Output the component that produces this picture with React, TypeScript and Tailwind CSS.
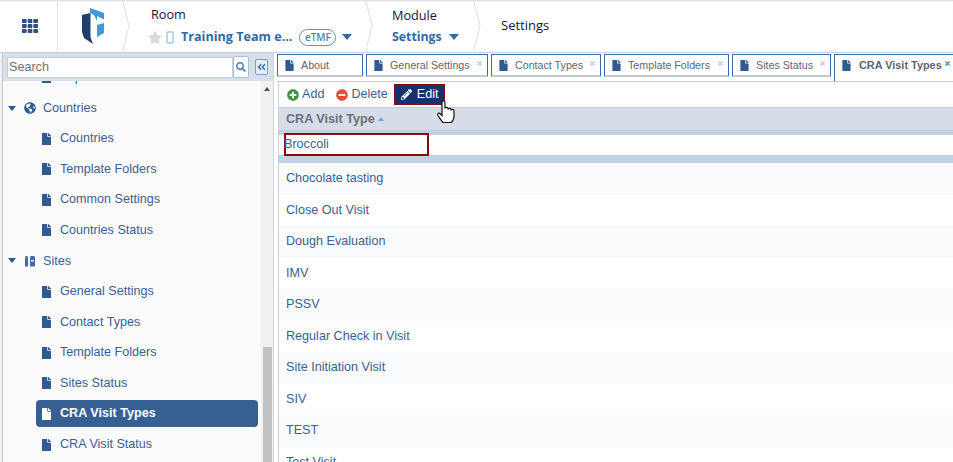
import React from "react";
import {
  FaAngleDoubleLeft,
  FaCaretDown,
  FaFile,
  FaGlobeAmericas,
  FaMinusCircle,
  FaPencilAlt,
  FaPlusCircle,
  FaSearch,
  FaStar,
  FaTh,
  FaTimes,
} from "react-icons/fa";

const tabs = [
  { label: "About", width: "w-[86px]", closable: false },
  { label: "General Settings", width: "w-[122px]", closable: true },
  { label: "Contact Types", width: "w-[110px]", closable: true },
  { label: "Template Folders", width: "w-[125px]", closable: true },
  { label: "Sites Status", width: "w-[99px]", closable: true },
];

const rows = [
  "Chocolate tasting",
  "Close Out Visit",
  "Dough Evaluation",
  "IMV",
  "PSSV",
  "Regular Check in Visit",
  "Site Initiation Visit",
  "SIV",
  "TEST",
  "Test Visit",
];

function Chevron() {
  return (
    <svg width="8" height="53" viewBox="0 0 8 53" className="shrink-0" fill="none">
      <path d="M0.500 0 L7 25 L0.500 53" stroke="#d3e2f1" strokeWidth="1" />
    </svg>
  );
}

function Caret() {
  return <span className="w-0 h-0 border-x-[5.500px] border-x-transparent border-t-[6px] border-t-[#2f6aa5]" />;
}

function TreeItem({ label, active }: { label: string; active?: boolean }) {
  return (
    <div className="h-[30.6px] flex items-center pl-[33px] pr-[3px]">
      <div
        className={`w-full h-[27px] flex items-center rounded-[4px] pl-[6px] text-[12.6px] ${
          active ? "bg-[#376092] text-white font-bold" : "text-[#3c5f92]"
        }`}
      >
        <FaFile className={`w-[9px] h-[12px] mr-[9px] ${active ? "text-white" : "text-[#2f5a92]"}`} />
        <span>{label}</span>
      </div>
    </div>
  );
}

function TreeGroup({ label, icon }: { label: string; icon: React.ReactNode }) {
  return (
    <div className="h-[30.6px] flex items-center pl-[5px] text-[12.6px] text-[#3c5f92]">
      <span className="w-0 h-0 border-x-[4.500px] border-x-transparent border-t-[5px] border-t-[#2f5a92]" />
      <span className="w-[12px] ml-[8px] mr-[7px] flex justify-center text-[#2f5a92]">{icon}</span>
      <span>{label}</span>
    </div>
  );
}

function SitesIcon() {
  return (
    <svg width="12" height="12" viewBox="0 0 12 12" fill="#3f6ea5">
      <path d="M1 3.500 L1.500 1 H3.500 L4 3.500 V11.500 H1 Z" />
      <path d="M6 3.500 L6.500 1 H10.500 L11 3.500 V11.500 H6 Z M7 5 V6.500 H10 V5 Z" fillRule="evenodd" />
    </svg>
  );
}

export default function App() {
  return (
    <div className="w-[953px] h-[462px] overflow-hidden bg-white font-['Liberation_Sans',Arial,sans-serif] flex flex-col">
      {/* Header */}
      <header className="h-[53px] shrink-0 flex border-b border-[#c9ced6] pl-[3px] bg-white font-['Open_Sans',sans-serif] shadow-[inset_0_2px_2px_-1px_#d8d8d8]">
        <div className="w-[55px] flex items-center justify-center border-r border-[#dfe7f0]">
          <FaTh className="w-[16px] h-[16px] text-[#2c4f85]" />
        </div>
        <div className="w-[64px] pl-[23px] pt-[8px]">
          <svg width="24" height="37" viewBox="0 0 24 37">
            <path d="M1 7 L9.500 5 V29 L12 36 L3 30 L1 24 Z" fill="#1f3f73" />
            <path d="M9 0 L23 5 V11.500 L16 8 V13 L13 7 L9 5 Z" fill="#3f97dd" />
            <path d="M16 17 L23 15 V25 L16 29 Z" fill="#3f97dd" />
          </svg>
        </div>
        <Chevron />
        <div className="w-[235px] pl-[21px] pt-[4px]">
          <div className="text-[12.700px] leading-[20px] text-[#14163c]">Room</div>
          <div className="flex items-center mt-[3px] h-[20px] -ml-[3px]">
            <FaStar className="w-[14px] h-[13px] text-[#d9d9d9]" />
            <svg width="8" height="13" viewBox="0 0 8 13" className="ml-[4px]" fill="none">
              <rect x="1" y="1" width="6" height="11" rx="1" stroke="#a3cbea" strokeWidth="1.500" />
            </svg>
            <span className="ml-[7px] text-[12.600px] font-bold text-[#2f6aa5]">Training Team e...</span>
            <span className="ml-[7px] w-[37px] h-[17px] flex items-center justify-center rounded-full border border-[#5f8fbe] text-[10px] font-semibold text-[#4f81b5]">
              eTMF
            </span>
            <span className="ml-[6px] flex">
              <Caret />
            </span>
          </div>
        </div>
        <Chevron />
        <div className="w-[100px] pl-[19px] pt-[4px]">
          <div className="text-[12.700px] leading-[22px] text-[#14163c]">Module</div>
          <div className="flex items-center h-[20px] mt-[1px]">
            <span className="text-[12.300px] font-bold text-[#2f6aa5]">Settings</span>
            <span className="ml-[7px] flex">
              <Caret />
            </span>
          </div>
        </div>
        <Chevron />
        <div className="pl-[20px] flex items-center text-[13px] text-[#14163c]">Settings</div>
      </header>

      <div className="flex flex-1 min-h-0">
        {/* Left edge of the page behind the panel */}
        <div className="w-[3px] shrink-0 bg-[#f1f1f1] border-r border-[#c4c8ce]" />

        {/* Sidebar */}
        <aside className="w-[270px] shrink-0 flex flex-col bg-[#fbfbfc]">
          <div className="h-[28px] shrink-0 flex items-center bg-[#d6dfea] pl-[4px]">
            <div className="w-[226px] h-[21px] bg-white border border-[#c5ced9] flex items-center pl-[1px] text-[12.600px] text-[#6f6f6f]">
              Search
            </div>
            <div className="w-[16px] h-[22px] bg-white border border-[#a9c0da] rounded-[2px] flex items-center justify-center">
              <FaSearch className="w-[10px] h-[10px] text-[#4a7fb8]" />
            </div>
            <div className="ml-[6px] w-[13px] h-[16px] bg-[#e5ecf5] border border-[#7d9fc9] rounded-[2px] flex items-center justify-center">
              <FaAngleDoubleLeft className="w-[9px] h-[10px] text-[#3f6fae]" />
            </div>
          </div>
          <div className="flex-1 min-h-0 flex">
            <div className="w-[258px] overflow-hidden">
              <div className="-mt-[18.900px]">
                <TreeItem label="Export" />
                <TreeGroup label="Countries" icon={<FaGlobeAmericas className="w-[12px] h-[12px]" />} />
                <TreeItem label="Countries" />
                <TreeItem label="Template Folders" />
                <TreeItem label="Common Settings" />
                <TreeItem label="Countries Status" />
                <TreeGroup label="Sites" icon={<SitesIcon />} />
                <TreeItem label="General Settings" />
                <TreeItem label="Contact Types" />
                <TreeItem label="Template Folders" />
                <TreeItem label="Sites Status" />
                <TreeItem label="CRA Visit Types" active />
                <TreeItem label="CRA Visit Status" />
              </div>
            </div>
            <div className="w-[12px] bg-[#f1f1f1] flex flex-col">
              <div className="h-[266px] mx-[2px] relative">
                <div className="absolute left-[1px] top-[6px] border-x-[3px] border-x-transparent border-b-[4px] border-b-[#505050]" />
              </div>
              <div className="flex-1 ml-[2px] mr-[1px] bg-[#c1c1c1]" />
            </div>
          </div>
        </aside>

        {/* Main */}
        <main className="flex-1 min-w-0 flex flex-col pl-[3px] border-l border-[#cfd6df] bg-white">
          <div className="h-[29px] shrink-0 flex gap-[3px] border-b border-[#cdcfd3] pt-[1px]">
            {tabs.map((t) => (
              <div
                key={t.label}
                className={`${t.width} shrink-0 h-[23px] relative flex items-center border border-b-2 border-[#3e6aa3] border-b-[#c3c9d2] pl-[7px] text-[10.700px] text-[#5f6671]`}
              >
                <FaFile className="w-[9px] h-[11px] text-[#2f5a92] mr-[7px]" />
                <span>{t.label}</span>
                {t.closable && <FaTimes className="absolute right-[4px] top-[5px] w-[7px] h-[7px] text-[#b9cbe0]" />}
              </div>
            ))}
            <div className="flex-1 relative flex items-center border-t border-l border-[#3e6aa3] pl-[7px] pb-[5px] text-[10.900px] font-bold text-[#5f6671] bg-white">
              <FaFile className="w-[9px] h-[11px] text-[#2f5a92] mr-[8px]" />
              <span>CRA Visit Types</span>
              <FaTimes className="absolute right-[2px] top-[5px] w-[7px] h-[7px] text-[#4f88c6]" />
            </div>
          </div>
          <div className="flex-1 min-h-0 flex flex-col ml-[1px] border-l border-[#cdcfd3]">
            <div className="h-[25px] shrink-0 flex items-center pl-[8px] text-[12.600px] text-[#3c5f92] relative">
              <FaPlusCircle className="w-[12px] h-[12px] text-[#3f9142] mr-[3px]" />
              <span>Add</span>
              <FaMinusCircle className="w-[12px] h-[12px] text-[#ea4b35] ml-[12px] mr-[3px]" />
              <span>Delete</span>
              <div className="ml-[6px] h-[21px] w-[51px] bg-[#14306f] border-2 border-[#850b12] flex items-center pl-[5px] text-white">
                <FaPencilAlt className="w-[11px] h-[11px] mr-[5px]" />
                <span>Edit</span>
              </div>
              {/* Mouse pointer over the Edit button */}
              <svg width="20" height="24" viewBox="0 0 20 24" className="absolute left-[157px] top-[18px]">
                <path
                  d="M6 2.500c0-2 3-2 3 0v6c0-1.600 3-1.600 3 0v1c0-1.500 3-1.500 3 0v1c0-1.400 3-1.400 3 0v5c0 3.500-1.500 6-3 7H7c-1.500-1.500-3-4-5-7-1-2 1-3.500 2.500-1.500L6 15.500z"
                  fill="#fff"
                  stroke="#111"
                  strokeWidth="1.200"
                />
              </svg>
            </div>
            <div className="flex-1 min-h-0 overflow-hidden">
              <div className="h-[24px] bg-[#d6dde8] border-y border-[#c7ccd4] flex items-center pl-[7px] text-[12.600px] font-bold text-[#69717c]">
                CRA Visit Type
                <span className="ml-[3px] border-x-[3.500px] border-x-transparent border-b-[4px] border-b-[#7fa3cf]" />
              </div>
              <div className="bg-[#c0d3e4] pt-[4px] pb-[7px]">
                <div className="h-[21px] bg-white border-b border-[#c7ccd4] flex items-center">
                  <div className="w-[145px] h-[23px] -mt-[1px] ml-[5px] border-2 border-[#850b12] flex items-center text-[12.600px] text-[#3c5f92]">
                    <span className="-ml-[2px]">Broccoli</span>
                  </div>
                </div>
              </div>
              {rows.map((r, i) => (
                <div
                  key={r}
                  className={`h-[31.500px] flex items-center pl-[7px] text-[12.600px] text-[#3c5f92] ${
                    i % 2 === 0 ? "bg-[#fafbfd]" : "bg-white"
                  }`}
                >
                  {r}
                </div>
              ))}
            </div>
          </div>
        </main>
      </div>
    </div>
  );
}
